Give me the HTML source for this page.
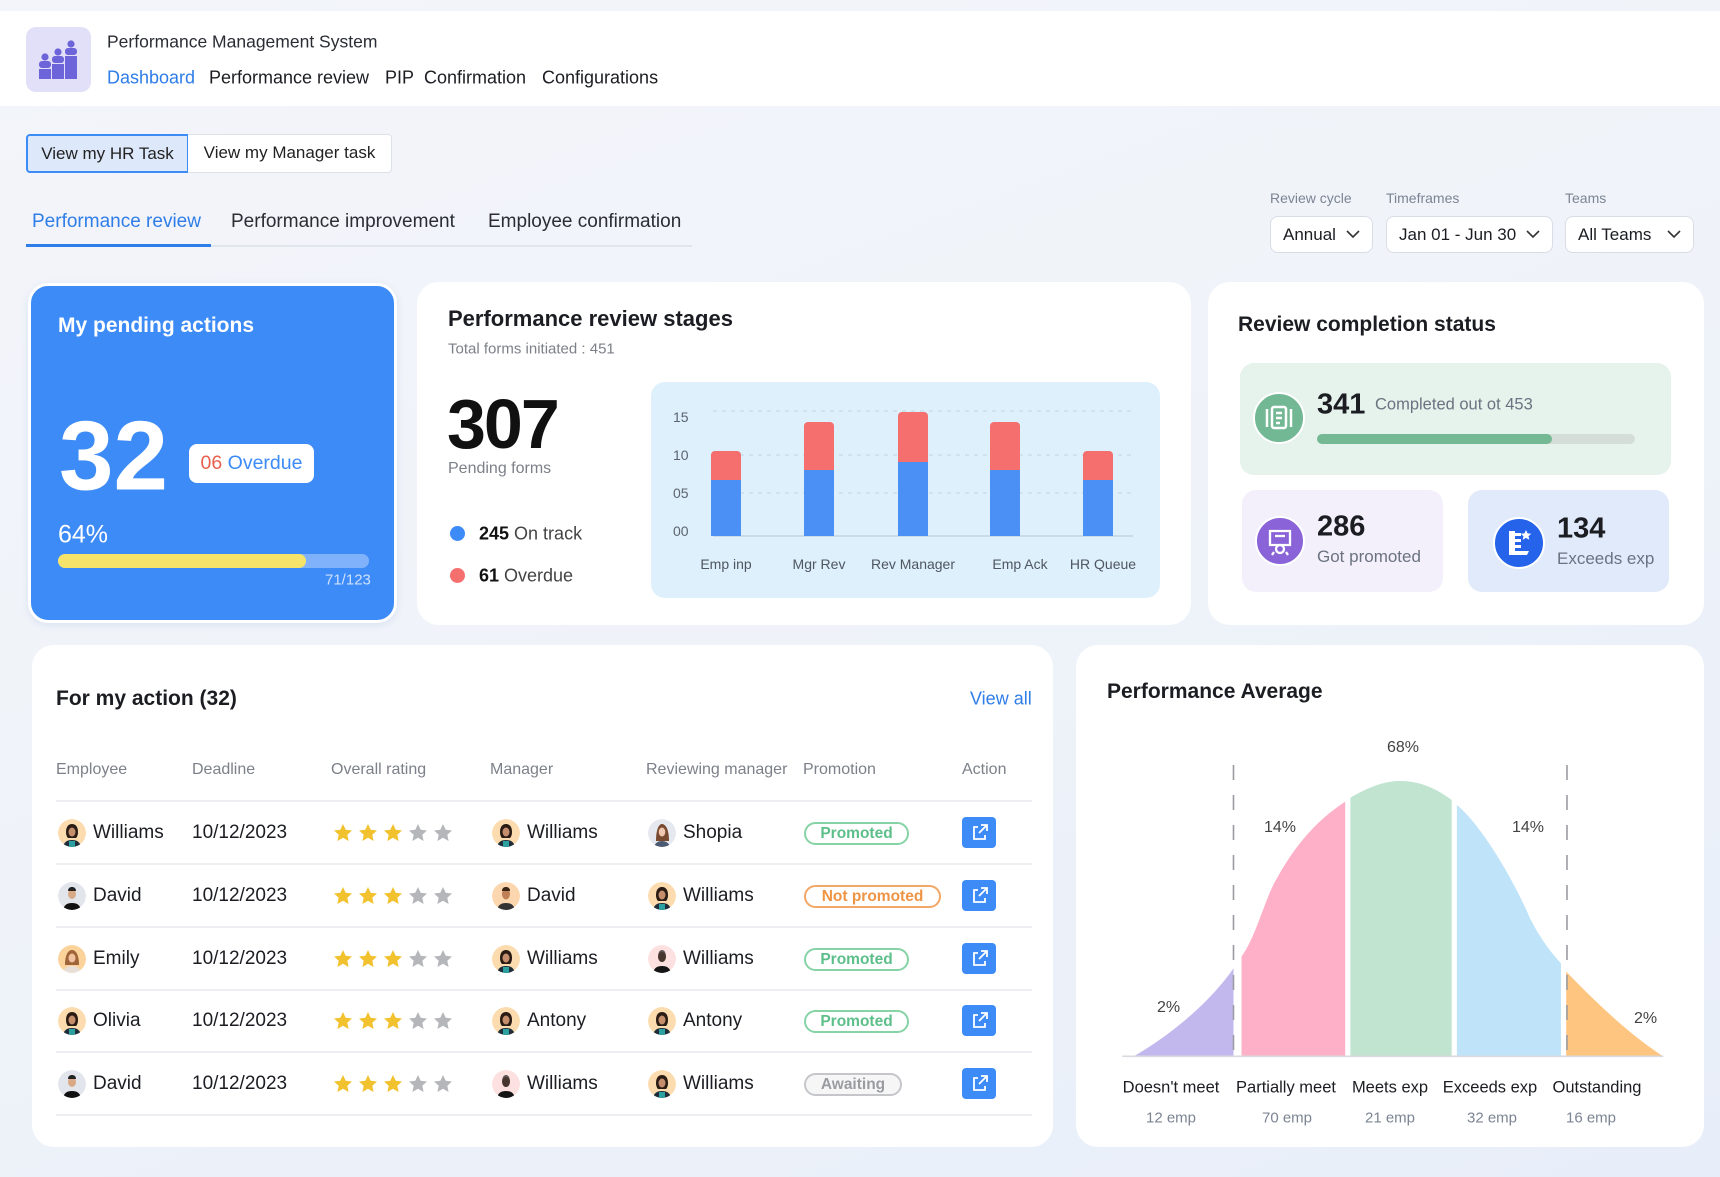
<!DOCTYPE html>
<html><head><meta charset="utf-8">
<style>
*{margin:0;padding:0;box-sizing:border-box}
body{width:1720px;height:1177px;overflow:hidden;font-family:"Liberation Sans",sans-serif;color:#1b1d22;background:linear-gradient(160deg,#f3f5fa 0%,#eff3f9 50%,#e8eef9 100%);position:relative}
.a{position:absolute;white-space:nowrap}
.card{position:absolute;background:#fff;border-radius:22px}
.vc{transform:translateY(-50%)}
.hd{position:absolute;left:0;top:11px;width:1720px;height:95px;background:#fff}
.sel{position:absolute;top:216px;height:37px;border:1px solid #d8dde6;border-radius:8px;background:#fff;font-size:17px;line-height:35px;padding-left:12px}
.sel svg{position:absolute;right:12px;top:13px}
.lbl{font-size:14px;color:#7c8493;top:190px}
.av{position:absolute;width:28px;height:28px;border-radius:50%;overflow:hidden}
.nm{font-size:19px}
.badge{position:absolute;height:23px;border:2px solid;border-radius:12px;font-size:15.5px;line-height:19px;text-align:center;font-weight:bold}
.act{position:absolute;width:34px;height:31px;border-radius:4px;background:#3d8bf7}
.line{position:absolute;left:56px;width:976px;height:2px;background:#eceef2}
</style></head><body>

<div class="hd"></div>
<div class="a" style="left:26px;top:27px;width:65px;height:65px;background:#e2e0f8;border-radius:10px"></div>
<svg class="a" style="left:26px;top:27px" width="65" height="65" viewBox="0 0 65 65" fill="#6d64d9">
<circle cx="19" cy="30" r="3.6"/><rect x="13" y="34" width="12" height="7" rx="3"/><rect x="13" y="42" width="12" height="10"/>
<circle cx="32" cy="25" r="3.6"/><rect x="26" y="29" width="12" height="7" rx="3"/><rect x="26" y="37" width="12" height="15"/>
<circle cx="45" cy="17" r="3.6"/><rect x="39" y="21" width="12" height="7" rx="3"/><rect x="39" y="29" width="12" height="23"/>
</svg>
<div class="a vc" style="left:107px;top:42px;font-size:17.5px;color:#2a2d33">Performance Management System</div>
<div class="a vc" style="left:107px;top:78px;font-size:18px;color:#2f7de8">Dashboard</div>
<div class="a vc" style="left:209px;top:78px;font-size:18px">Performance review</div>
<div class="a vc" style="left:385px;top:78px;font-size:18px">PIP</div>
<div class="a vc" style="left:424px;top:78px;font-size:18px">Confirmation</div>
<div class="a vc" style="left:542px;top:78px;font-size:18px">Configurations</div>

<div class="a" style="left:26px;top:134px;width:163px;height:39px;background:#dde9fb;border:2px solid #3d8bf7;border-radius:4px 0 0 4px;font-size:17px;line-height:35px;text-align:center;color:#222">View my HR Task</div>
<div class="a" style="left:188px;top:134px;width:204px;height:39px;background:#fff;border:1.5px solid #dde1e8;border-left:none;border-radius:0 4px 4px 0;font-size:17px;line-height:36px;text-align:center;color:#222">View my Manager task</div>

<div class="a vc" style="left:32px;top:222px;font-size:19px;color:#2f7de8">Performance review</div>
<div class="a vc" style="left:231px;top:222px;font-size:19px;color:#2a2d33">Performance improvement</div>
<div class="a vc" style="left:488px;top:222px;font-size:19px;color:#2a2d33">Employee confirmation</div>
<div class="a" style="left:26px;top:245px;width:666px;height:2px;background:#e1e5ec"></div>
<div class="a" style="left:26px;top:244px;width:185px;height:3px;background:#2f7de8"></div>

<div class="a lbl" style="left:1270px">Review cycle</div>
<div class="a lbl" style="left:1386px">Timeframes</div>
<div class="a lbl" style="left:1565px">Teams</div>
<div class="sel" style="left:1270px;width:103px">Annual<svg width="14" height="9"><path d="M1 1l6 6 6-6" fill="none" stroke="#333" stroke-width="1.6"/></svg></div>
<div class="sel" style="left:1386px;width:167px">Jan 01 - Jun 30<svg width="14" height="9"><path d="M1 1l6 6 6-6" fill="none" stroke="#333" stroke-width="1.6"/></svg></div>
<div class="sel" style="left:1565px;width:129px">All Teams<svg width="14" height="9"><path d="M1 1l6 6 6-6" fill="none" stroke="#333" stroke-width="1.6"/></svg></div>

<!-- pending -->
<div class="a" style="left:28px;top:283px;width:369px;height:340px;background:#3d8bf7;border-radius:20px;border:3px solid #fff;box-shadow:0 2px 8px rgba(60,100,180,.12)"></div>
<div class="a vc" style="left:58px;top:326px;font-size:21px;font-weight:bold;color:#fff">My pending actions</div>
<div class="a vc" style="left:59px;top:456px;font-size:98px;font-weight:bold;color:#fff;letter-spacing:0px">32</div>
<div class="a" style="left:189px;top:444px;width:125px;height:39px;background:#fff;border-radius:8px;font-size:19.5px;line-height:39px;text-align:center;color:#3d8bf7"><span style="color:#e8604c">06</span> Overdue</div>
<div class="a vc" style="left:58px;top:535px;font-size:25px;color:#fff">64%</div>
<div class="a" style="left:58px;top:554px;width:311px;height:14px;background:#7fb2fa;border-radius:7px"></div>
<div class="a" style="left:58px;top:554px;width:248px;height:14px;background:#f6e46a;border-radius:7px"></div>
<div class="a vc" style="left:325px;top:580px;font-size:15px;color:#cfe0fd">71/123</div>

<!-- stages -->
<div class="card" style="left:417px;top:282px;width:774px;height:343px"></div>
<div class="a vc" style="left:448px;top:319px;font-size:22px;font-weight:bold">Performance review stages</div>
<div class="a vc" style="left:448px;top:349px;font-size:15px;color:#7c8088">Total forms initiated : 451</div>
<div class="a vc" style="left:447px;top:424px;font-size:70px;font-weight:bold;color:#111;letter-spacing:-2px">307</div>
<div class="a vc" style="left:448px;top:469px;font-size:16px;color:#7c8088">Pending forms</div>
<div class="a" style="left:450px;top:526px;width:15px;height:15px;border-radius:50%;background:#3d8bf7"></div>
<div class="a vc" style="left:479px;top:534px;font-size:18px;color:#444"><b style="color:#111">245</b> On track</div>
<div class="a" style="left:450px;top:568px;width:15px;height:15px;border-radius:50%;background:#f56f6f"></div>
<div class="a vc" style="left:479px;top:576px;font-size:18px;color:#444"><b style="color:#111">61</b> Overdue</div>
<div class="a" style="left:651px;top:382px;width:509px;height:216px;background:#ddf0fc;border-radius:14px"></div>
<svg class="a" style="left:651px;top:382px" width="509" height="216">
<g stroke="#c2d4e2" stroke-dasharray="4 5" stroke-width="1"><line x1="62" y1="29" x2="482" y2="29"/><line x1="62" y1="73" x2="482" y2="73"/><line x1="62" y1="111" x2="482" y2="111"/></g>
<line x1="62" y1="154" x2="482" y2="154" stroke="#c6d3de" stroke-width="1.5"/>
<g font-family="Liberation Sans" font-size="14" fill="#5d6470"><text x="22" y="40">15</text><text x="22" y="78">10</text><text x="22" y="116">05</text><text x="22" y="154">00</text></g>
<g fill="#f56f6f"><rect x="60" y="69" width="30" height="40" rx="4"/><rect x="153" y="40" width="30" height="60" rx="4"/><rect x="247" y="30" width="30" height="60" rx="4"/><rect x="339" y="40" width="30" height="60" rx="4"/><rect x="432" y="69" width="30" height="40" rx="4"/></g>
<g fill="#4a90f5"><rect x="60" y="98" width="30" height="56"/><rect x="153" y="88" width="30" height="66"/><rect x="247" y="80" width="30" height="74"/><rect x="339" y="88" width="30" height="66"/><rect x="432" y="98" width="30" height="56"/></g>
<g font-family="Liberation Sans" font-size="14" fill="#4f5662" text-anchor="middle"><text x="75" y="187">Emp inp</text><text x="168" y="187">Mgr Rev</text><text x="262" y="187">Rev Manager</text><text x="369" y="187">Emp Ack</text><text x="452" y="187">HR Queue</text></g>
</svg>

<!-- completion -->
<div class="card" style="left:1208px;top:282px;width:496px;height:343px"></div>
<div class="a vc" style="left:1238px;top:325px;font-size:21px;font-weight:bold">Review completion status</div>
<div class="a" style="left:1240px;top:363px;width:431px;height:112px;background:#e6f2ec;border-radius:14px"></div>
<div class="a" style="left:1253px;top:392px;width:52px;height:52px;border-radius:50%;background:#72b894;border:2px solid #fff"></div>
<svg class="a" style="left:1253px;top:392px" width="52" height="52"><g fill="none" stroke="#fff" stroke-width="2.5"><rect x="19" y="15" width="14" height="21" rx="2"/><line x1="23" y1="21" x2="29" y2="21"/><line x1="23" y1="26" x2="29" y2="26"/><line x1="23" y1="31" x2="27" y2="31"/><line x1="14" y1="17" x2="14" y2="35"/><line x1="38" y1="17" x2="38" y2="35"/></g></svg>
<div class="a vc" style="left:1317px;top:405px;font-size:29px;font-weight:bold">341</div>
<div class="a vc" style="left:1375px;top:405px;font-size:16.5px;color:#6b7280">Completed out ot 453</div>
<div class="a" style="left:1317px;top:434px;width:318px;height:10px;background:#d5ddd9;border-radius:5px"></div>
<div class="a" style="left:1317px;top:434px;width:235px;height:10px;background:#74b993;border-radius:5px"></div>

<div class="a" style="left:1242px;top:490px;width:201px;height:102px;background:#f3f0fb;border-radius:14px"></div>
<div class="a" style="left:1255px;top:516px;width:50px;height:50px;border-radius:50%;background:#8a63d9;border:2px solid #fff"></div>
<svg class="a" style="left:1255px;top:516px" width="50" height="50"><g fill="none" stroke="#fff" stroke-width="2.3"><path d="M15 15h20v14h-20z"/><line x1="20" y1="20" x2="30" y2="20"/><circle cx="25" cy="33" r="4"/><path d="M19 36l-2 3M31 36l2 3"/></g></svg>
<div class="a vc" style="left:1317px;top:527px;font-size:29px;font-weight:bold">286</div>
<div class="a vc" style="left:1317px;top:557px;font-size:17px;color:#6b7280">Got promoted</div>

<div class="a" style="left:1468px;top:490px;width:201px;height:102px;background:#e0eafb;border-radius:14px"></div>
<div class="a" style="left:1493px;top:517px;width:52px;height:52px;border-radius:50%;background:#2563eb;border:2px solid #fff"></div>
<svg class="a" style="left:1493px;top:517px" width="52" height="52"><g fill="#fff"><path d="M16 14h6v24h-6z"/><path d="M22 16h6v3h-6zM22 22h6v3h-6zM22 28h6v3h-6zM22 34h14l-2 4h-12z"/><path d="M33 13l1.6 3.4 3.6.4-2.7 2.4.8 3.6-3.3-1.9-3.3 1.9.8-3.6-2.7-2.4 3.6-.4z"/></g></svg>
<div class="a vc" style="left:1557px;top:529px;font-size:29px;font-weight:bold">134</div>
<div class="a vc" style="left:1557px;top:559px;font-size:17px;color:#6b7280">Exceeds exp</div>

<!-- table card -->
<div class="card" style="left:32px;top:645px;width:1021px;height:502px"></div>
<div class="a vc" style="left:56px;top:699px;font-size:21px;font-weight:bold">For my action (32)</div>
<div class="a vc" style="left:970px;top:699px;font-size:18px;color:#2f7de8">View all</div>
<div class="a vc" style="left:56px;top:770px;font-size:16px;color:#7c8088">Employee</div>
<div class="a vc" style="left:192px;top:770px;font-size:16px;color:#7c8088">Deadline</div>
<div class="a vc" style="left:331px;top:770px;font-size:16px;color:#7c8088">Overall rating</div>
<div class="a vc" style="left:490px;top:770px;font-size:16px;color:#7c8088">Manager</div>
<div class="a vc" style="left:646px;top:770px;font-size:16px;color:#7c8088">Reviewing manager</div>
<div class="a vc" style="left:803px;top:770px;font-size:16px;color:#7c8088">Promotion</div>
<div class="a vc" style="left:962px;top:770px;font-size:16px;color:#7c8088">Action</div>
<div class="line" style="top:800px"></div>
<div class="line" style="top:863px"></div>
<div class="line" style="top:926px"></div>
<div class="line" style="top:989px"></div>
<div class="line" style="top:1051px"></div>
<div class="line" style="top:1114px"></div>

<svg width="0" height="0" style="position:absolute">
<defs>
<symbol id="p1" viewBox="0 0 28 28"><circle cx="14" cy="14" r="14" fill="#fcdcae"/><path d="M8 13c0-6 3-8 6-8s6 2 6 8c0 3-1 5-2 6h-8c-1-1-2-3-2-6z" fill="#2a1c14"/><ellipse cx="14" cy="13" rx="3.5" ry="4.5" fill="#c58e6c"/><path d="M5 28c1-5 4-7 9-7s8 2 9 7z" fill="#1f2c3a"/><path d="M11 22h6v6h-6z" fill="#2aa0a0"/></symbol>
<symbol id="p2" viewBox="0 0 28 28"><circle cx="14" cy="14" r="14" fill="#e2e6ec"/><ellipse cx="14" cy="12" rx="4" ry="5" fill="#d9a987"/><path d="M10 9c0-3 2-4 4-4s4 1 4 4z" fill="#222"/><path d="M5 28c1-5 4-7 9-7s8 2 9 7z" fill="#111"/></symbol>
<symbol id="p3" viewBox="0 0 28 28"><circle cx="14" cy="14" r="14" fill="#fbd39a"/><path d="M7 20c0-10 3-15 7-15s7 5 7 15z" fill="#a0643a"/><ellipse cx="14" cy="13" rx="3.5" ry="4.5" fill="#f0c2a0"/><path d="M5 28c1-5 4-7 9-7s8 2 9 7z" fill="#e8e0d8"/></symbol>
<symbol id="p4" viewBox="0 0 28 28"><circle cx="14" cy="14" r="14" fill="#e6e8f0"/><path d="M8 22c0-12 3-17 6-17s7 4 7 17z" fill="#7a4a30"/><ellipse cx="14" cy="13" rx="3.3" ry="4.5" fill="#f0c8b0"/><path d="M6 28c1-4 4-6 8-6s7 2 8 6z" fill="#4a5a70"/></symbol>
<symbol id="p5" viewBox="0 0 28 28"><circle cx="14" cy="14" r="14" fill="#fde0e0"/><ellipse cx="14" cy="12" rx="4" ry="5" fill="#b07a5a"/><path d="M10 12c0-5 2-7 4-7s4 2 4 7c-1 4-2 5-4 5s-3-1-4-5z" fill="#1a1a1a" opacity=".7"/><path d="M5 28c1-5 4-7 9-7s8 2 9 7z" fill="#151515"/></symbol>
<symbol id="p6" viewBox="0 0 28 28"><circle cx="14" cy="14" r="14" fill="#fcd6ae"/><ellipse cx="14" cy="12" rx="4" ry="5.5" fill="#c07f56"/><path d="M10 9c0-3 2-4 4-4s4 1 4 4z" fill="#3a2414"/><path d="M5 28c1-5 4-7 9-7s8 2 9 7z" fill="#333"/></symbol>
<symbol id="st" viewBox="0 0 20 20"><path d="M10 1l2.7 5.8 6.3.7-4.7 4.3 1.3 6.2L10 14.8 4.4 18l1.3-6.2L1 7.5l6.3-.7z"/></symbol>
<symbol id="ext" viewBox="0 0 34 31"><g fill="none" stroke="#fff" stroke-width="1.8"><path d="M16 10h-4v12h11v-4"/><path d="M17 16l7-7M19 8h6v6"/></g></symbol>
</defs></svg>

<!-- row 1 -->
<svg class="av" style="left:58px;top:819px"><use href="#p1"/></svg>
<div class="a vc nm" style="left:93px;top:833px">Williams</div>
<div class="a vc nm" style="left:192px;top:833px">10/12/2023</div>
<svg class="a" style="left:333px;top:823px" width="125" height="20"><use href="#st" x="0" width="20" height="20" fill="#f2c12e"/><use href="#st" x="25" width="20" height="20" fill="#f2c12e"/><use href="#st" x="50" width="20" height="20" fill="#f2c12e"/><use href="#st" x="75" width="20" height="20" fill="#b4b6ba"/><use href="#st" x="100" width="20" height="20" fill="#b4b6ba"/></svg>
<svg class="av" style="left:492px;top:819px"><use href="#p1"/></svg>
<div class="a vc nm" style="left:527px;top:833px">Williams</div>
<svg class="av" style="left:648px;top:819px"><use href="#p4"/></svg>
<div class="a vc nm" style="left:683px;top:833px">Shopia</div>
<div class="badge" style="left:804px;top:822px;width:105px;border-color:#86d3a6;color:#5cbf8a">Promoted</div>
<svg class="act" style="left:962px;top:817px"><use href="#ext"/></svg>
<!-- row 2 -->
<svg class="av" style="left:58px;top:882px"><use href="#p2"/></svg>
<div class="a vc nm" style="left:93px;top:896px">David</div>
<div class="a vc nm" style="left:192px;top:896px">10/12/2023</div>
<svg class="a" style="left:333px;top:886px" width="125" height="20"><use href="#st" x="0" width="20" height="20" fill="#f2c12e"/><use href="#st" x="25" width="20" height="20" fill="#f2c12e"/><use href="#st" x="50" width="20" height="20" fill="#f2c12e"/><use href="#st" x="75" width="20" height="20" fill="#b4b6ba"/><use href="#st" x="100" width="20" height="20" fill="#b4b6ba"/></svg>
<svg class="av" style="left:492px;top:882px"><use href="#p6"/></svg>
<div class="a vc nm" style="left:527px;top:896px">David</div>
<svg class="av" style="left:648px;top:882px"><use href="#p1"/></svg>
<div class="a vc nm" style="left:683px;top:896px">Williams</div>
<div class="badge" style="left:804px;top:885px;width:137px;border-color:#f2a766;color:#ef9444">Not promoted</div>
<svg class="act" style="left:962px;top:880px"><use href="#ext"/></svg>
<!-- row 3 -->
<svg class="av" style="left:58px;top:945px"><use href="#p3"/></svg>
<div class="a vc nm" style="left:93px;top:959px">Emily</div>
<div class="a vc nm" style="left:192px;top:959px">10/12/2023</div>
<svg class="a" style="left:333px;top:949px" width="125" height="20"><use href="#st" x="0" width="20" height="20" fill="#f2c12e"/><use href="#st" x="25" width="20" height="20" fill="#f2c12e"/><use href="#st" x="50" width="20" height="20" fill="#f2c12e"/><use href="#st" x="75" width="20" height="20" fill="#b4b6ba"/><use href="#st" x="100" width="20" height="20" fill="#b4b6ba"/></svg>
<svg class="av" style="left:492px;top:945px"><use href="#p1"/></svg>
<div class="a vc nm" style="left:527px;top:959px">Williams</div>
<svg class="av" style="left:648px;top:945px"><use href="#p5"/></svg>
<div class="a vc nm" style="left:683px;top:959px">Williams</div>
<div class="badge" style="left:804px;top:948px;width:105px;border-color:#86d3a6;color:#5cbf8a">Promoted</div>
<svg class="act" style="left:962px;top:943px"><use href="#ext"/></svg>
<!-- row 4 -->
<svg class="av" style="left:58px;top:1007px"><use href="#p1"/></svg>
<div class="a vc nm" style="left:93px;top:1021px">Olivia</div>
<div class="a vc nm" style="left:192px;top:1021px">10/12/2023</div>
<svg class="a" style="left:333px;top:1011px" width="125" height="20"><use href="#st" x="0" width="20" height="20" fill="#f2c12e"/><use href="#st" x="25" width="20" height="20" fill="#f2c12e"/><use href="#st" x="50" width="20" height="20" fill="#f2c12e"/><use href="#st" x="75" width="20" height="20" fill="#b4b6ba"/><use href="#st" x="100" width="20" height="20" fill="#b4b6ba"/></svg>
<svg class="av" style="left:492px;top:1007px"><use href="#p1"/></svg>
<div class="a vc nm" style="left:527px;top:1021px">Antony</div>
<svg class="av" style="left:648px;top:1007px"><use href="#p1"/></svg>
<div class="a vc nm" style="left:683px;top:1021px">Antony</div>
<div class="badge" style="left:804px;top:1010px;width:105px;border-color:#86d3a6;color:#5cbf8a">Promoted</div>
<svg class="act" style="left:962px;top:1005px"><use href="#ext"/></svg>
<!-- row 5 -->
<svg class="av" style="left:58px;top:1070px"><use href="#p2"/></svg>
<div class="a vc nm" style="left:93px;top:1084px">David</div>
<div class="a vc nm" style="left:192px;top:1084px">10/12/2023</div>
<svg class="a" style="left:333px;top:1074px" width="125" height="20"><use href="#st" x="0" width="20" height="20" fill="#f2c12e"/><use href="#st" x="25" width="20" height="20" fill="#f2c12e"/><use href="#st" x="50" width="20" height="20" fill="#f2c12e"/><use href="#st" x="75" width="20" height="20" fill="#b4b6ba"/><use href="#st" x="100" width="20" height="20" fill="#b4b6ba"/></svg>
<svg class="av" style="left:492px;top:1070px"><use href="#p5"/></svg>
<div class="a vc nm" style="left:527px;top:1084px">Williams</div>
<svg class="av" style="left:648px;top:1070px"><use href="#p1"/></svg>
<div class="a vc nm" style="left:683px;top:1084px">Williams</div>
<div class="badge" style="left:804px;top:1073px;width:98px;border-color:#c4c6ca;color:#9a9ca0;background:#f6f6f7">Awaiting</div>
<svg class="act" style="left:962px;top:1068px"><use href="#ext"/></svg>

<!-- performance average -->
<div class="card" style="left:1076px;top:645px;width:628px;height:502px"></div>
<div class="a vc" style="left:1107px;top:692px;font-size:21px;font-weight:bold">Performance Average</div>
<svg class="a" style="left:1076px;top:645px" width="630" height="505" viewBox="0 0 1568 1515" preserveAspectRatio="none">
<path d="M145,1233 C250,1160 340,1060 392,970 L392,1233 Z" fill="#c3b8ee"/>
<path d="M412,1233 L412,935 C450,870 470,760 500,700 C560,570 620,510 670,470 L670,1233 Z" fill="#fdb0c8"/>
<path d="M683,1233 L683,458 C730,425 770,408 808,408 C850,408 890,425 935,465 L935,1233 Z" fill="#c0e4cf"/>
<path d="M948,1233 L948,480 C1000,530 1080,680 1130,820 C1160,890 1185,925 1207,955 L1207,1233 Z" fill="#bfe3f8"/>
<path d="M1220,1233 L1220,980 C1300,1080 1380,1170 1460,1233 Z" fill="#fec581"/>
<line x1="115" y1="1234" x2="1462" y2="1234" stroke="#d8dadf" stroke-width="5"/>
<g stroke="#9a9ca2" stroke-width="4" stroke-dasharray="45 45"><line x1="392" y1="360" x2="392" y2="1230"/><line x1="1222" y1="360" x2="1222" y2="1230"/></g>
</svg>
<div class="a vc" style="left:1387px;top:748px;font-size:16px;color:#444">68%</div>
<div class="a vc" style="left:1264px;top:828px;font-size:16px;color:#444">14%</div>
<div class="a vc" style="left:1512px;top:828px;font-size:16px;color:#444">14%</div>
<div class="a vc" style="left:1157px;top:1008px;font-size:16px;color:#444">2%</div>
<div class="a vc" style="left:1634px;top:1019px;font-size:16px;color:#444">2%</div>
<div class="a vc" style="left:1171px;top:1088px;font-size:16.5px;transform:translate(-50%,-50%)">Doesn't meet</div>
<div class="a vc" style="left:1286px;top:1088px;font-size:16.5px;transform:translate(-50%,-50%)">Partially meet</div>
<div class="a vc" style="left:1390px;top:1088px;font-size:16.5px;transform:translate(-50%,-50%)">Meets exp</div>
<div class="a vc" style="left:1490px;top:1088px;font-size:16.5px;transform:translate(-50%,-50%)">Exceeds exp</div>
<div class="a vc" style="left:1597px;top:1088px;font-size:16.5px;transform:translate(-50%,-50%)">Outstanding</div>
<div class="a" style="left:1171px;top:1118px;font-size:15px;color:#7c8493;transform:translate(-50%,-50%)">12 emp</div>
<div class="a" style="left:1287px;top:1118px;font-size:15px;color:#7c8493;transform:translate(-50%,-50%)">70 emp</div>
<div class="a" style="left:1390px;top:1118px;font-size:15px;color:#7c8493;transform:translate(-50%,-50%)">21 emp</div>
<div class="a" style="left:1492px;top:1118px;font-size:15px;color:#7c8493;transform:translate(-50%,-50%)">32 emp</div>
<div class="a" style="left:1591px;top:1118px;font-size:15px;color:#7c8493;transform:translate(-50%,-50%)">16 emp</div>
</body></html>
